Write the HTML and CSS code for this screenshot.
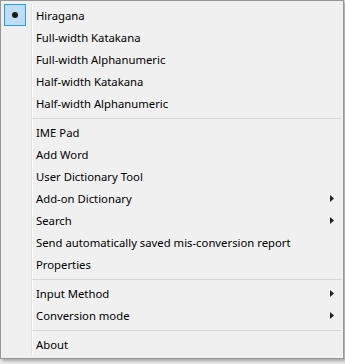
FILE: index.html
```html
<!DOCTYPE html>
<html>
<head>
<meta charset="utf-8">
<link rel="stylesheet" href="styles.css">
</head>
<body>
<div class="menu">
  <ul class="list">
    <li class="item"><span class="check"><span class="dot"></span></span><span class="label">Hiragana</span></li>
    <li class="item"><span class="slot"></span><span class="label">Full-width Katakana</span></li>
    <li class="item"><span class="slot"></span><span class="label">Full-width Alphanumeric</span></li>
    <li class="item"><span class="slot"></span><span class="label">Half-width Katakana</span></li>
    <li class="item"><span class="slot"></span><span class="label">Half-width Alphanumeric</span></li>
    <li class="sep"></li>
    <li class="item"><span class="slot"></span><span class="label">IME Pad</span></li>
    <li class="item"><span class="slot"></span><span class="label">Add Word</span></li>
    <li class="item"><span class="slot"></span><span class="label">User Dictionary Tool</span></li>
    <li class="item"><span class="slot"></span><span class="label">Add-on Dictionary</span><svg class="arrow" width="4" height="7" viewBox="0 0 4 7"><polygon points="0,0 4,3.5 0,7" fill="#222"/></svg></li>
    <li class="item"><span class="slot"></span><span class="label">Search</span><svg class="arrow" width="4" height="7" viewBox="0 0 4 7"><polygon points="0,0 4,3.5 0,7" fill="#222"/></svg></li>
    <li class="item"><span class="slot"></span><span class="label">Send automatically saved mis-conversion report</span></li>
    <li class="item"><span class="slot"></span><span class="label">Properties</span></li>
    <li class="sep"></li>
    <li class="item"><span class="slot"></span><span class="label">Input Method</span><svg class="arrow" width="4" height="7" viewBox="0 0 4 7"><polygon points="0,0 4,3.5 0,7" fill="#222"/></svg></li>
    <li class="item"><span class="slot"></span><span class="label">Conversion mode</span><svg class="arrow" width="4" height="7" viewBox="0 0 4 7"><polygon points="0,0 4,3.5 0,7" fill="#222"/></svg></li>
    <li class="sep"></li>
    <li class="item"><span class="slot"></span><span class="label">About</span></li>
  </ul>
</div>
</body>
</html>
```

FILE: styles.css
```css
html, body {
  margin: 0;
  padding: 0;
}
body {
  background: #ebebeb;
  width: 345px;
  height: 364px;
  overflow: hidden;
  font-family: "Noto Sans", "Open Sans", sans-serif;
  font-size: 11.3px;
  color: #000;
}
.menu {
  width: 342px;
  height: 357px;
  border: 1px solid #979797;
  background: #f0f0f0;
  padding: 0;
  box-shadow: 2px 2px 3px rgba(0, 0, 0, 0.3);
}
.list {
  list-style: none;
  margin: 3px 2px 3px 3px;
  padding: 0;
  background: linear-gradient(to right,
    transparent 27px, #e2e2e2 27px, #e2e2e2 28px,
    #ffffff 28px, #ffffff 29px, transparent 29px);
}
.item {
  height: 22px;
  display: flex;
  align-items: center;
}
.slot {
  width: 22px;
  height: 22px;
  flex: none;
}
.check {
  width: 20px;
  height: 20px;
  flex: none;
  border: 1px solid #26a0da;
  background: #c0dcf3;
  display: flex;
  align-items: center;
  justify-content: center;
}
.dot {
  width: 6px;
  height: 6px;
  border-radius: 50%;
  background: #1a1a1a;
}
.label {
  flex: 1;
  margin-left: 10px;
  padding-top: 1px;
  white-space: nowrap;
}
.arrow {
  flex: none;
  margin-right: 7px;
}
.sep {
  height: 1px;
  margin: 4px 0 2px 28px;
  background: #d7d7d7;
}
```
